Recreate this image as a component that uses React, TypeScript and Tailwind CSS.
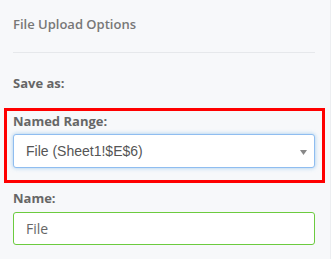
import React from "react";

export default function App() {
  return (
    <div className="w-[331px] h-[259px] bg-[#f7f8fa] border-r border-[#eceef1] overflow-hidden" style={{ fontFamily: '"Open Sans", sans-serif' }}>
      <div className="pl-[13px] pr-[15px]">
        <div className="pt-[15px] pb-[19px] leading-[18px] border-b border-[#e6e8eb] text-[13px] font-semibold text-[#777]">File Upload Options</div>
        <div className="pt-[21px] leading-[18px] text-[13px] font-bold text-[#666]">Save as:</div>
      </div>
      <div className="mt-[16px] ml-[4px] mr-[5px] border-[3px] border-[#ff0000] pt-[1px] pb-[12px] pl-[6px] pr-[7px]">
        <div className="text-[13px] font-bold text-[#666] leading-[18px]">Named Range:</div>
        <div className="relative mt-[4px] h-[34px] rounded-[3px] bg-white border border-[#8fbdf0] shadow-[0_0_4px_rgba(102,175,233,0.6)] flex items-center pl-[12px]">
          <span className="text-[14px] text-[#555]" style={{ fontFamily: '"Liberation Sans", Arial, sans-serif' }}>File (Sheet1!$E$6)</span>
          <svg className="absolute right-[7px] top-[15px]" width="7" height="5" viewBox="0 0 7 5"><path d="M0 0 L7 0 L3.5 5 Z" fill="#888" /></svg>
        </div>
      </div>
      <div className="pl-[13px] pr-[15px]">
        <div className="pt-[6px] text-[13px] font-bold text-[#666] leading-[18px]">Name:</div>
        <div className="mt-[5px] h-[33px] rounded-[3px] bg-white border border-[#6ccb3f] flex items-center pl-[12px] text-[14px] text-[#666]">File</div>
      </div>
    </div>
  );
}
